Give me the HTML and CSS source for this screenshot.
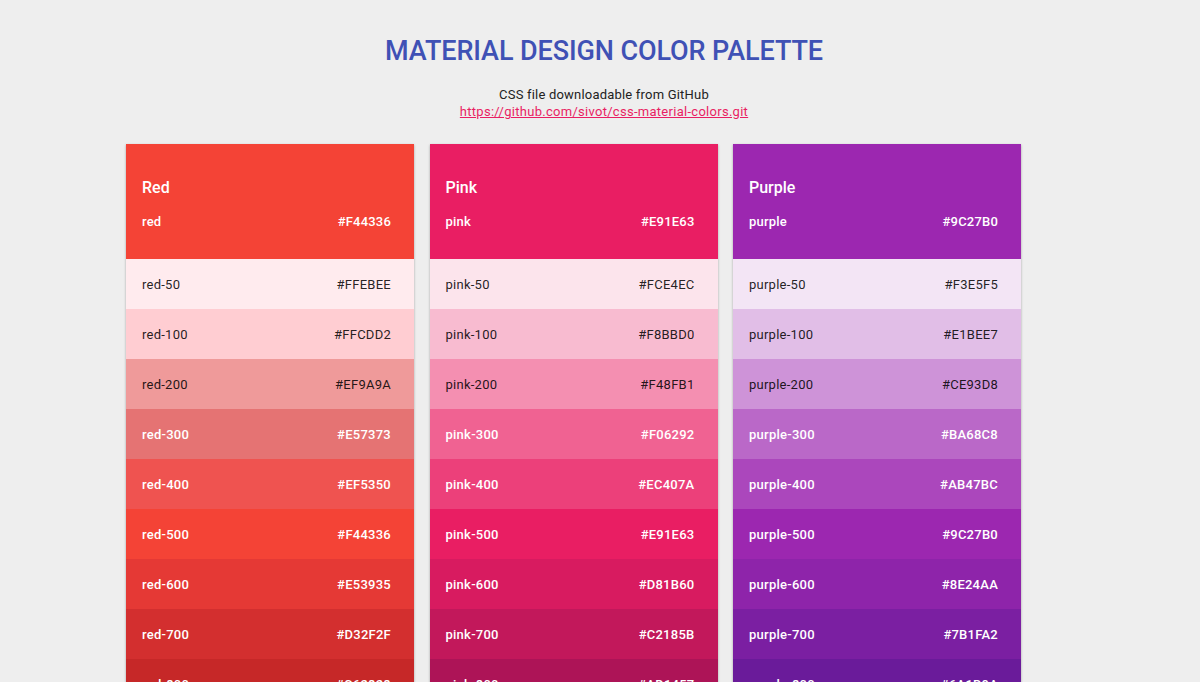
FILE: index.html
```html
<!DOCTYPE html>
<html lang="en">
<head>
<meta charset="utf-8">
<title>Material Design Color Palette</title>
<link rel="stylesheet" href="styles.css">
</head>
<body>
<header class="page-head">
  <h1 class="page-title">MATERIAL DESIGN COLOR PALETTE</h1>
  <p class="page-sub">CSS file downloadable from GitHub</p>
  <a class="page-link" href="#">https://github.com/sivot/css-material-colors.git</a>
</header>

<main class="palette">
  <section class="swatch-card">
    <div class="card-head bg-red">
      <h2 class="card-title">Red</h2>
      <div class="card-main"><span>red</span><span>#F44336</span></div>
    </div>
    <div class="row dark-text" style="background:#FFEBEE"><span>red-50</span><span>#FFEBEE</span></div>
    <div class="row dark-text" style="background:#FFCDD2"><span>red-100</span><span>#FFCDD2</span></div>
    <div class="row dark-text" style="background:#EF9A9A"><span>red-200</span><span>#EF9A9A</span></div>
    <div class="row light-text" style="background:#E57373"><span>red-300</span><span>#E57373</span></div>
    <div class="row light-text" style="background:#EF5350"><span>red-400</span><span>#EF5350</span></div>
    <div class="row light-text" style="background:#F44336"><span>red-500</span><span>#F44336</span></div>
    <div class="row light-text" style="background:#E53935"><span>red-600</span><span>#E53935</span></div>
    <div class="row light-text" style="background:#D32F2F"><span>red-700</span><span>#D32F2F</span></div>
    <div class="row light-text" style="background:#C62828"><span>red-800</span><span>#C62828</span></div>
    <div class="row light-text" style="background:#B71C1C"><span>red-900</span><span>#B71C1C</span></div>
  </section>

  <section class="swatch-card">
    <div class="card-head bg-pink">
      <h2 class="card-title">Pink</h2>
      <div class="card-main"><span>pink</span><span>#E91E63</span></div>
    </div>
    <div class="row dark-text" style="background:#FCE4EC"><span>pink-50</span><span>#FCE4EC</span></div>
    <div class="row dark-text" style="background:#F8BBD0"><span>pink-100</span><span>#F8BBD0</span></div>
    <div class="row dark-text" style="background:#F48FB1"><span>pink-200</span><span>#F48FB1</span></div>
    <div class="row light-text" style="background:#F06292"><span>pink-300</span><span>#F06292</span></div>
    <div class="row light-text" style="background:#EC407A"><span>pink-400</span><span>#EC407A</span></div>
    <div class="row light-text" style="background:#E91E63"><span>pink-500</span><span>#E91E63</span></div>
    <div class="row light-text" style="background:#D81B60"><span>pink-600</span><span>#D81B60</span></div>
    <div class="row light-text" style="background:#C2185B"><span>pink-700</span><span>#C2185B</span></div>
    <div class="row light-text" style="background:#AD1457"><span>pink-800</span><span>#AD1457</span></div>
    <div class="row light-text" style="background:#880E4F"><span>pink-900</span><span>#880E4F</span></div>
  </section>

  <section class="swatch-card">
    <div class="card-head bg-purple">
      <h2 class="card-title">Purple</h2>
      <div class="card-main"><span>purple</span><span>#9C27B0</span></div>
    </div>
    <div class="row dark-text" style="background:#F3E5F5"><span>purple-50</span><span>#F3E5F5</span></div>
    <div class="row dark-text" style="background:#E1BEE7"><span>purple-100</span><span>#E1BEE7</span></div>
    <div class="row dark-text" style="background:#CE93D8"><span>purple-200</span><span>#CE93D8</span></div>
    <div class="row light-text" style="background:#BA68C8"><span>purple-300</span><span>#BA68C8</span></div>
    <div class="row light-text" style="background:#AB47BC"><span>purple-400</span><span>#AB47BC</span></div>
    <div class="row light-text" style="background:#9C27B0"><span>purple-500</span><span>#9C27B0</span></div>
    <div class="row light-text" style="background:#8E24AA"><span>purple-600</span><span>#8E24AA</span></div>
    <div class="row light-text" style="background:#7B1FA2"><span>purple-700</span><span>#7B1FA2</span></div>
    <div class="row light-text" style="background:#6A1B9A"><span>purple-800</span><span>#6A1B9A</span></div>
    <div class="row light-text" style="background:#4A148C"><span>purple-900</span><span>#4A148C</span></div>
  </section>
</main>
</body>
</html>
```

FILE: styles.css
```css
* {
  box-sizing: border-box;
}

body {
  margin: 0;
  background: #eeeeee;
  font-family: Roboto, "Liberation Sans", sans-serif;
  color: #212121;
}

.page-head {
  text-align: center;
  padding: 36px 0 0 8px;
  font-size: 13px;
  line-height: 17px;
}

.page-title {
  margin: 0;
  font-size: 27px;
  line-height: 30px;
  font-weight: 500;
  letter-spacing: -0.1px;
  color: #3F51B5;
}

.page-sub {
  margin: 20px 0 0;
  color: #222;
  letter-spacing: 0.2px;
}

.page-link {
  display: block;
  color: #E91E63;
  text-decoration: underline;
  letter-spacing: 0.28px;
}

.palette {
  width: 948px;
  margin: 24px auto 0;
  display: flex;
  flex-wrap: wrap;
  gap: 15.5px;
}

.swatch-card {
  width: 288px;
  box-shadow: 0 1px 3px rgba(0, 0, 0, 0.12), 0 1px 2px rgba(0, 0, 0, 0.2);
}

.card-head {
  height: 115px;
  padding: 34px 23px 0 16px;
  color: #fff;
}

.bg-red { background: #F44336; }
.bg-pink { background: #E91E63; }
.bg-purple { background: #9C27B0; }

.card-title {
  margin: 0;
  font-size: 16px;
  line-height: 20px;
  font-weight: 500;
}

.card-main {
  margin-top: 15px;
  display: flex;
  justify-content: space-between;
  font-size: 13px;
  line-height: 18px;
  font-weight: 500;
  letter-spacing: 0.2px;
}

.row {
  height: 50px;
  padding: 0 23px 0 16px;
  display: flex;
  align-items: center;
  justify-content: space-between;
  font-size: 13px;
  letter-spacing: 0.25px;
}

.dark-text {
  color: rgba(0, 0, 0, 0.87);
  font-weight: 400;
}

.light-text {
  color: #fff;
  font-weight: 500;
}
```
